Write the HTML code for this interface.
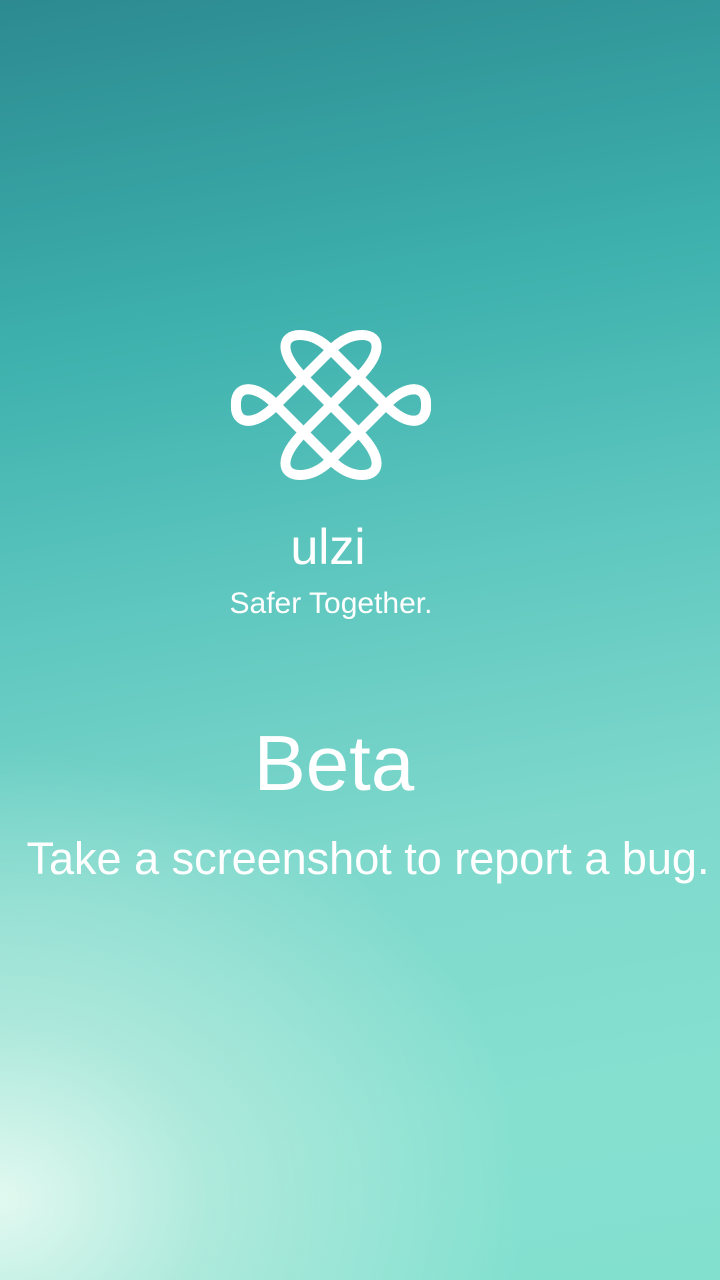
<!DOCTYPE html>
<html><head><meta charset="utf-8"><style>
html,body{margin:0;padding:0}
body{width:720px;height:1280px;overflow:hidden;position:relative;font-family:"Liberation Sans","DejaVu Sans",sans-serif;color:#fff;
background:
radial-gradient(ellipse 700px 600px at 0px 1200px, rgba(230,250,242,0.95) 0%, rgba(200,240,228,0.6) 30%, rgba(150,225,210,0) 75%),
linear-gradient(170deg,#2c8a90 0%,#3db0ad 25%,#5ec7bf 45%,#7ed8cc 65%,#86e0d0 85%,#82e0cf 100%);}
.t{position:absolute;left:0;width:720px;text-align:center;white-space:nowrap}
</style></head><body>
<svg width="720" height="1280" style="position:absolute;left:0;top:0">
<g transform="translate(331,405)" fill="none" stroke="#fff" stroke-width="10" stroke-linecap="round">
<line x1="-27.5" y1="-27.5" x2="27.5" y2="27.5"/>
<line x1="27.5" y1="-27.5" x2="-27.5" y2="27.5"/>
<line x1="0" y1="-55" x2="55" y2="0"/>
<line x1="-55" y1="0" x2="0" y2="55"/>
<line x1="0" y1="-55" x2="-55" y2="0"/>
<line x1="55" y1="0" x2="0" y2="55"/>
<g id="lobe"><path d="M-27.5,-27.5 C-52,-52 -50,-70 -31,-70 C-18,-70 -8,-63 0,-55"/>
<path d="M-55,0 C-76,-22 -96,-20 -95,0 C-96,20 -76,22 -55,0"/></g>
<use href="#lobe" transform="scale(-1,1)"/>
<use href="#lobe" transform="scale(1,-1)"/>
<use href="#lobe" transform="scale(-1,-1)"/>
</g></svg>
<div class="t" style="top:518px;font-size:50px;left:-32px">ulzi</div>
<div class="t" style="top:587px;font-size:30px;left:-29px">Safer Together.</div>
<div class="t" style="top:718px;font-size:78px;left:-26px">Beta</div>
<div class="t" style="top:833px;font-size:45px;left:8px">Take a screenshot to report a bug.</div>
</body></html>
